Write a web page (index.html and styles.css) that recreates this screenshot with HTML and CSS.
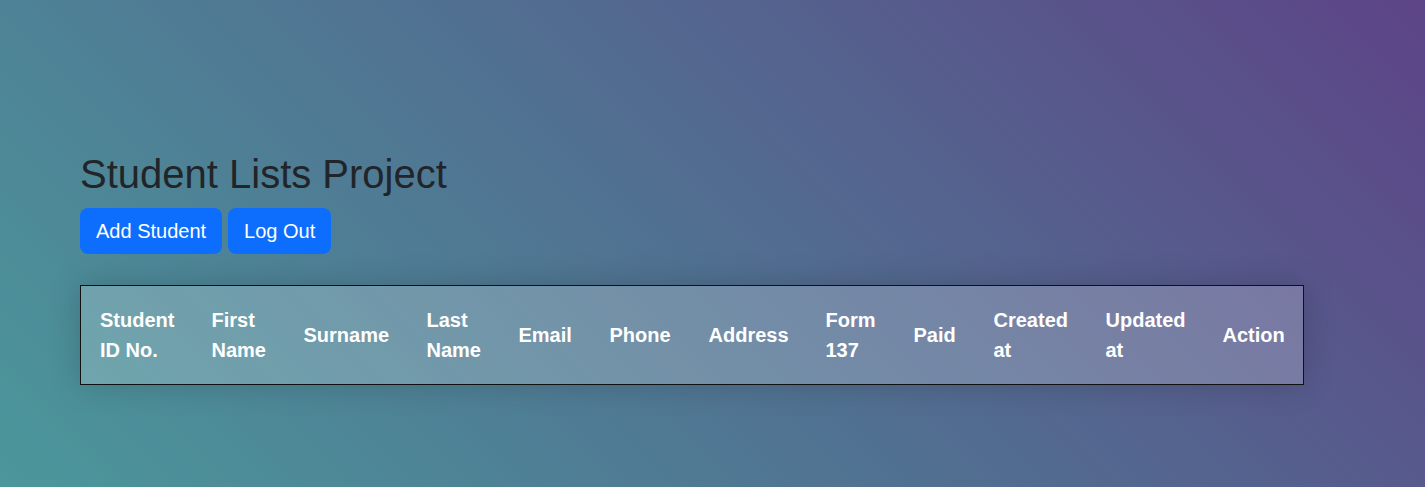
FILE: index.html
```html
<!DOCTYPE html>
<html lang="en">
<head>
<meta charset="utf-8">
<title>Student Lists Project</title>
<link rel="stylesheet" href="styles.css">
</head>
<body>
<main class="page">
  <h1 class="title">Student Lists Project</h1>
  <div class="actions">
    <button class="btn">Add Student</button>
    <button class="btn">Log Out</button>
  </div>
  <table class="students">
    <thead>
      <tr>
        <th class="c1">Student ID No.</th>
        <th class="c2">First Name</th>
        <th class="c3">Surname</th>
        <th class="c4">Last Name</th>
        <th class="c5">Email</th>
        <th class="c6">Phone</th>
        <th class="c7">Address</th>
        <th class="c8">Form 137</th>
        <th class="c9">Paid</th>
        <th class="c10">Created at</th>
        <th class="c11">Updated at</th>
        <th class="c12">Action</th>
      </tr>
    </thead>
  </table>
</main>
</body>
</html>
```

FILE: styles.css
```css
html, body {
  margin: 0;
  height: 100%;
}
body {
  font-family: "Liberation Sans", Arial, sans-serif;
  background: linear-gradient(45deg, #4b979b 0%, #516f91 50%, #5d4487 100%);
  min-height: 100vh;
}
.page {
  padding: 150px 0 0 80px;
}
.title {
  margin: 0 0 10px;
  font-size: 40px;
  font-weight: 500;
  line-height: 1.2;
  color: #212529;
}
.actions {
  display: flex;
  gap: 6px;
}
.btn {
  font-family: inherit;
  font-size: 20px;
  line-height: 1.5;
  padding: 8px 16px;
  border: none;
  border-radius: 8px;
  background: #0d6efd;
  color: #fff;
  cursor: pointer;
}
.students {
  margin-top: 31px;
  width: 1224px;
  table-layout: fixed;
  border-collapse: collapse;
  border: 1px solid #111;
  background: rgba(255, 255, 255, 0.2);
  box-shadow: 0 0 30px rgba(0, 0, 0, 0.18);
}
.students th {
  box-sizing: border-box;
  padding: 18.5px 11px 19px 19px;
  color: #fff;
  font-size: 20px;
  font-weight: bold;
  line-height: 1.5;
  text-align: left;
  vertical-align: middle;
}
.c1 { width: 112px; }
.c2 { width: 92px; }
.c3 { width: 123px; }
.c4 { width: 92px; }
.c5 { width: 91px; }
.c6 { width: 99px; }
.c7 { width: 117px; }
.c8 { width: 88px; }
.c9 { width: 80px; }
.c10 { width: 112px; }
.c11 { width: 117px; }
.c12 { width: auto; }
```
